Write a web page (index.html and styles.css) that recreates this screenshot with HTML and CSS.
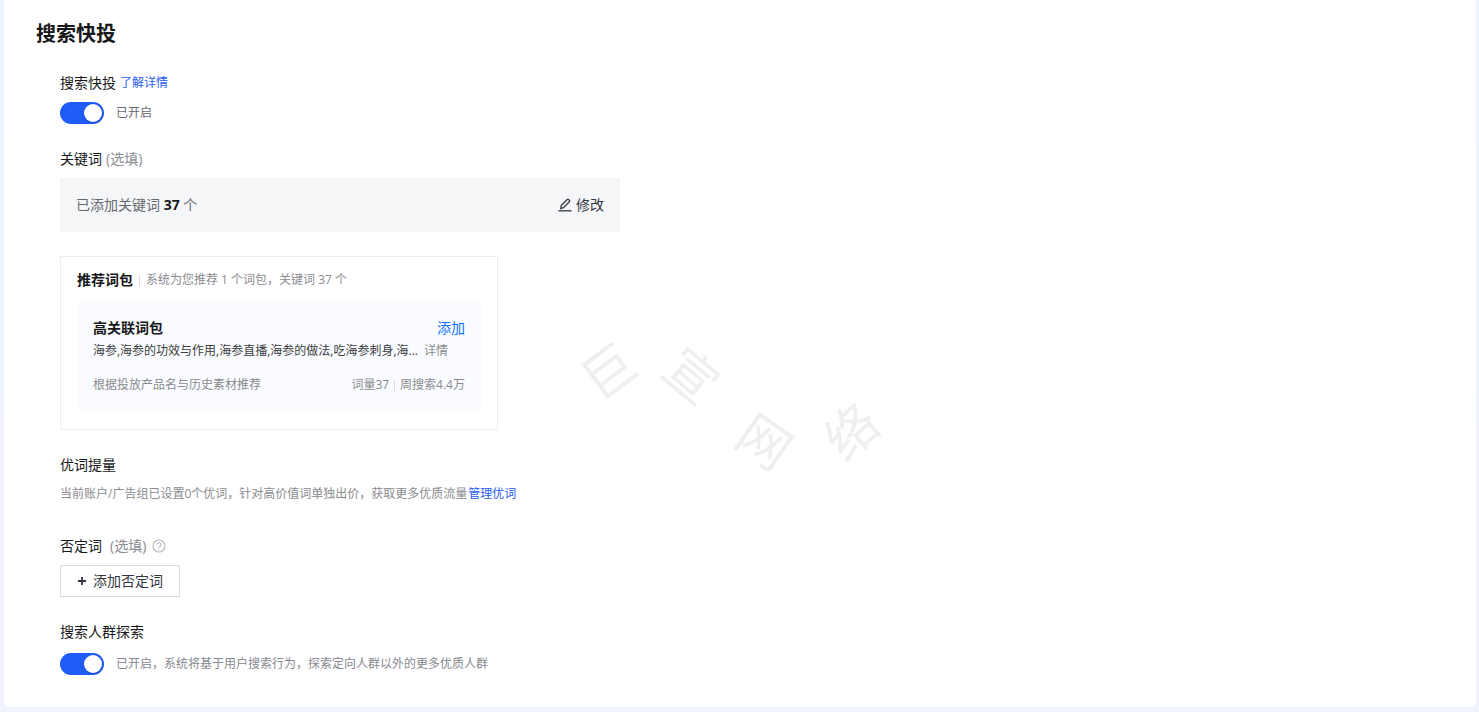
FILE: index.html
```
<!DOCTYPE html>
<html lang="zh-CN">
<head>
    <meta charset="UTF-8">
    <meta name="viewport" content="width=device-width, initial-scale=1.0">
    <title>搜索快投</title>
    <link rel="stylesheet" href="styles.css">
</head>
<body>
    <main class="panel">
        <h1 class="panel-title">搜索快投</h1>
        <form class="form">
            <section class="group">
                <div class="label-row">
                    <label class="label" for="quickSwitch">搜索快投</label>
                    <a class="link" href="#">了解详情</a>
                </div>
                <div class="switch-row">
                    <input class="switch" type="checkbox" id="quickSwitch" checked>
                    <span class="switch-text">已开启</span>
                </div>
            </section>

            <section class="group">
                <div class="label-row">
                    <h2 class="label">关键词</h2>
                    <span class="optional">(选填)</span>
                </div>
                <div class="keyword-box">
                    <span>已添加关键词 <strong>37</strong> 个</span>
                    <button class="edit-btn" type="button">
                        <svg width="14" height="14" viewBox="0 0 14 14" fill="none" stroke="currentColor" stroke-width="1.3">
                            <path d="M2.800 10.600l.4-3.100 6-6a.9.9 0 0 1 1.300 0l.9.9a.9.9 0 0 1 0 1.300l-6 6z"/>
                            <path d="M.5 12.800h13"/>
                        </svg>
                        修改
                    </button>
                </div>
            </section>

            <section class="group package">
                <div class="package-head">
                    <h2 class="package-title">推荐词包</h2>
                    <span class="divider"></span>
                    <span>系统为您推荐 1 个词包，关键词 37 个</span>
                </div>
                <div class="package-item">
                    <div class="item-row item-head">
                        <h3 class="item-title">高关联词包</h3>
                        <button class="add-link" type="button">添加</button>
                    </div>
                    <div class="item-words">
                        <span>海参,海参的功效与作用,海参直播,海参的做法,吃海参刺身,海...</span>
                        <a class="detail" href="#">详情</a>
                    </div>
                    <div class="item-row item-foot">
                        <span>根据投放产品名与历史素材推荐</span>
                        <span class="stats">词量37<span class="divider"></span>周搜索4.4万</span>
                    </div>
                </div>
            </section>

            <section class="group group-wide">
                <h2 class="label">优词提量</h2>
                <p class="desc">当前账户/广告组已设置0个优词，针对高价值词单独出价，获取更多优质流量<a class="link" href="#">管理优词</a></p>
            </section>

            <section class="group">
                <div class="label-row negative-row">
                    <h2 class="label">否定词</h2>
                    <span class="optional">(选填)</span>
                    <svg class="help" width="14" height="14" viewBox="0 0 14 14" fill="none" stroke="currentColor" stroke-width="1.1">
                        <circle cx="7" cy="7" r="6"/>
                        <path d="M5 5.600a2 1.900 0 1 1 3 1.600c-.7.4-1 .7-1 1.300M7 9.500v1.200"/>
                    </svg>
                </div>
                <button class="add-btn" type="button">
                    <svg width="10" height="10" viewBox="0 0 10 10" stroke="currentColor" stroke-width="1.800">
                        <path d="M5 1v8M1 5h8"/>
                    </svg>
                    添加否定词
                </button>
            </section>

            <section class="group group-last">
                <label class="label" for="crowdSwitch">搜索人群探索</label>
                <div class="switch-row">
                    <input class="switch" type="checkbox" id="crowdSwitch" checked>
                    <span class="switch-text light">已开启，系统将基于用户搜索行为，探索定向人群以外的更多优质人群</span>
                </div>
            </section>
        </form>

        <div class="watermark">
            <span class="mark mark-1">巨</span>
            <span class="mark mark-2">宣</span>
            <span class="mark mark-3">网</span>
            <span class="mark mark-4">络</span>
        </div>
    </main>
</body>
</html>
```
FILE: styles.css
```
* {
    box-sizing: border-box;
}

body {
    margin: 0;
    padding: 0 3px 5px 4px;
    background: linear-gradient(to bottom, #eaf5ff, #f1f4ff 60%) #f1f4ff;
    color: #17181a;
    font-family: "Open Sans", "Noto Sans CJK SC", sans-serif;
    font-size: 14px;
    line-height: 22px;
}

h1, h2, h3, p {
    margin: 0;
}

button {
    margin: 0;
    padding: 0;
    border: none;
    background: none;
    font: inherit;
    cursor: pointer;
}

a {
    text-decoration: none;
}

.panel {
    position: relative;
    padding: 20px 32px 32px;
    background-color: #fff;
    border-radius: 0 0 6px 6px;
}

.panel-title {
    font-size: 20px;
    line-height: 28px;
    font-weight: 700;
}

.form {
    padding: 24px 0 0 24px;
}

.group {
    margin-bottom: 24px;
}

.group-wide {
    margin-bottom: 32px;
}

.group-last {
    margin-bottom: 0;
}

.label {
    display: block;
    font-size: 14px;
    font-weight: 400;
}

.label-row {
    display: flex;
    align-items: center;
    gap: 4px;
}

.negative-row {
    gap: 8px;
}

.negative-row .help {
    margin-left: -2px;
}

.link {
    color: #1f5bf5;
    font-size: 12px;
}

.optional {
    color: #898b8f;
}

.help {
    color: #b4b8bf;
}

.switch-row {
    display: flex;
    align-items: center;
    gap: 12px;
    margin-top: 8px;
}

.group-last .switch-row {
    margin-top: 10px;
}

.switch {
    appearance: none;
    flex: none;
    width: 44px;
    height: 22px;
    margin: 0;
    padding: 2px;
    border-radius: 11px;
    background-color: #1f5bf5;
    cursor: pointer;
}

.switch::before {
    content: "";
    display: block;
    width: 18px;
    height: 18px;
    border-radius: 50%;
    background-color: #fff;
    box-shadow: 0 1px 2px rgba(0, 0, 0, 0.2);
}

.switch:checked::before {
    margin-left: auto;
}

.switch-text {
    color: #66696f;
    font-size: 12px;
}

.switch-text.light {
    color: #85888f;
}

.keyword-box {
    display: flex;
    justify-content: space-between;
    align-items: center;
    max-width: 560px;
    margin-top: 8px;
    padding: 16px;
    background-color: #f5f6f8;
    color: #66696f;
}

.keyword-box strong {
    color: #17181a;
}

.edit-btn {
    display: flex;
    align-items: center;
    gap: 4px;
    color: #333640;
}

/* recommended word package */
.package {
    max-width: 438px;
    padding: 12px 16px 19px;
    border: 1px solid #ededed;
}

.package-head {
    display: flex;
    align-items: center;
    gap: 6px;
    margin-bottom: 11px;
    color: #898b8f;
    font-size: 12px;
}

.package-title,
.item-title {
    color: #17181a;
    font-size: 14px;
    font-weight: 700;
}

.divider {
    width: 1px;
    height: 11px;
    background-color: #dcdcdc;
}

.package-item {
    padding: 16px;
    background-color: #f9fbfe;
    font-size: 12px;
}

.item-row {
    display: flex;
    justify-content: space-between;
    align-items: center;
}

.item-head {
    line-height: 20px;
    margin-bottom: 2px;
}

.add-link {
    color: #0a73ff;
    font-size: 14px;
}

.item-words {
    display: flex;
    gap: 6px;
    color: #3a3c40;
    white-space: nowrap;
}

.detail {
    color: #898b8f;
}

.item-foot {
    margin-top: 14px;
    color: #898b8f;
    line-height: 18px;
}

.stats {
    display: flex;
    align-items: center;
    gap: 5px;
}

.desc {
    margin-top: 8px;
    color: #898b8f;
    font-size: 12px;
    line-height: 19px;
}

.desc .link {
    margin-left: 1px;
}

.add-btn {
    display: flex;
    justify-content: center;
    align-items: center;
    gap: 6px;
    width: 120px;
    height: 32px;
    margin-top: 8px;
    border: 1px solid #d9dadc;
    background-color: #fff;
    color: #333640;
}

/* watermark floats over the whole panel */
.watermark {
    position: absolute;
    top: 336px;
    left: 570px;
    width: 320px;
    height: 140px;
    color: #efefef;
    font-size: 52px;
    line-height: 52px;
    pointer-events: none;
}

.mark {
    position: absolute;
}

.mark-1 {
    top: 9px;
    left: 8px;
    transform: rotate(-37deg);
}

.mark-2 {
    top: 13px;
    left: 92px;
    transform: rotate(40deg);
}

.mark-3 {
    top: 79px;
    left: 165px;
    transform: rotate(35deg);
}

.mark-4 {
    top: 69px;
    left: 251px;
    transform: rotate(-42deg);
}
```
